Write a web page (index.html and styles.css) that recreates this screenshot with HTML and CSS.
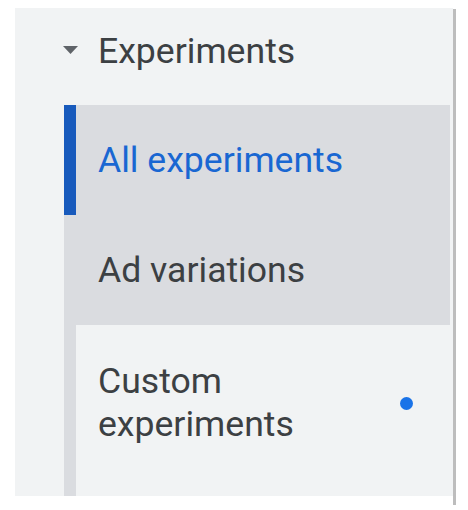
FILE: index.html
```html
<!DOCTYPE html>
<html>
<head>
<meta charset="utf-8">
<link rel="stylesheet" href="styles.css">
</head>
<body>
<div class="frame">
  <div class="panel">
    <div class="header">
      <svg class="caret" width="15" height="8" viewBox="0 0 15 8"><polygon points="0,0 15,0 7.5,8" fill="#5f6368"/></svg>
      <span class="title">Experiments</span>
    </div>
    <div class="group">
      <div class="item selected"><span class="label">All experiments</span></div>
      <div class="item hover"><span class="label">Ad variations</span></div>
      <div class="item"><span class="label">Custom experiments</span><span class="dot"></span></div>
    </div>
  </div>
  <div class="edge"></div>
</div>
</body>
</html>
```
FILE: styles.css
```css
html, body {
  margin: 0;
  padding: 0;
  background: #ffffff;
}
body {
  font-family: Roboto, "Liberation Sans", Arial, sans-serif;
  font-size: 35.6px;
  color: #3c4043;
}
.frame {
  display: flex;
  margin: 8px 0 0 15px;
  width: 441px;
  height: 497px;
}
.panel {
  width: 438px;
  height: 488px;
  background: #f1f3f4;
  overflow: hidden;
  display: flex;
  flex-direction: column;
}
.edge {
  width: 3px;
  margin-top: 1px;
  background: #bdbdbd;
}
.header {
  display: flex;
  align-items: center;
  padding: 22px 0 0 48px;
  height: 42px;
  margin-bottom: 33px;
  line-height: 42px;
}
.caret {
  margin-right: 20px;
  margin-bottom: 2px;
  flex: none;
}
.title {
  color: #3c4043;
}
.group {
  flex: 1;
  margin-left: 49px;
  margin-right: 3px;
  border-left: 12px solid #dadce0;
}
.item {
  display: flex;
  align-items: center;
  padding: 34px 33px 34px 22px;
  line-height: 42px;
}
.item.selected {
  margin-left: -12px;
  border-left: 12px solid #185abc;
  background: #dadce0;
}
.item.selected .label {
  color: #1967d2;
}
.item.hover {
  background: #dadce0;
}
.item .label {
  flex: 1;
  min-width: 0;
}
.item:last-child {
  padding-top: 35px;
  padding-bottom: 33px;
  line-height: 43px;
}
.item:last-child .label {
  max-width: 290px;
}
.dot {
  flex: none;
  width: 13px;
  height: 13px;
  border-radius: 50%;
  background: #1a73e8;
  margin-left: 12px;
}
```
